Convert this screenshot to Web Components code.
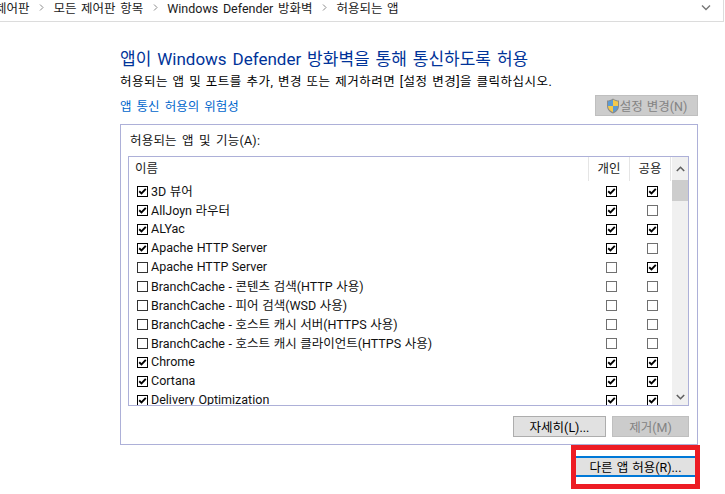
<!DOCTYPE html>
<html lang="ko">
<head>
<meta charset="utf-8">
<title>허용되는 앱</title>
<style>
    html, body { margin: 0; padding: 0; background: #fff; overflow: hidden; }
    body { font: 12.5px Roboto, "Noto Sans CJK KR", sans-serif; color: #000; }
</style>
</head>
<body>
<address-bar></address-bar>
<allowed-apps-page></allowed-apps-page>

<script>
const FONT = `Roboto, "Noto Sans CJK KR", sans-serif`;

class AddressBar extends HTMLElement {
    constructor() {
        super();
        this.shadowDOM = this.attachShadow({mode: "open"});
        const crumbs = ["제어판", "모든 제어판 항목", "Windows Defender 방화벽", "허용되는 앱"];
        const chevron = `<svg width="5" height="7" viewBox="0 0 5 7"><path d="M1 .5 4 3.5 1 6.5" fill="none" stroke="#8a8a8a"/></svg>`;
        this.shadowDOM.innerHTML = `
            <style>
                :host {
                    display: flex;
                    align-items: center;
                    box-sizing: border-box;
                    height: 22px;
                    width: 724px;
                    padding: 0 12px 6px 0;
                    border-bottom: 1px solid #dcdcdc;
                    border-right: 1px solid #dcdcdc;
                    font: 12.5px ${FONT};
                    word-spacing: 1.5px;
                    color: #1a1a1a;
                    overflow: hidden;
                }
                .trail { display: flex; align-items: center; gap: 9.5px; margin-left: -5px; white-space: nowrap; flex: 1; }
            </style>
            <div class="trail">${crumbs.map(c => `<span>${c}</span>`).join(chevron)}</div>
            <svg width="10" height="6" viewBox="0 0 10 6"><path d="M1 .5 5 4.5 9 .5" fill="none" stroke="#777" stroke-width="1.4"/></svg>`;
    }
}
customElements.define("address-bar", AddressBar);

class WinButton extends HTMLElement {
    constructor() {
        super();
        this.attachShadow({mode: "open"}).innerHTML = `
            <style>
                :host {
                    display: inline-flex;
                    align-items: center;
                    justify-content: center;
                    box-sizing: border-box;
                    height: 21px;
                    background: #e1e1e1;
                    border: 1px solid #adadad;
                    font: 12.5px ${FONT};
                    word-spacing: 1px;
                    color: #000;
                    white-space: nowrap;
                }
                :host([disabled]) {
                    background: #cccccc;
                    border-color: #bfbfbf;
                    color: #838383;
                }
            </style>
            <slot></slot>`;
    }
}
customElements.define("win-button", WinButton);

class WinCheck extends HTMLElement {
    constructor() {
        super();
        const checked = this.hasAttribute("checked");
        this.attachShadow({mode: "open"}).innerHTML = `
            <style>
                :host {
                    display: block;
                    flex: none;
                    box-sizing: border-box;
                    width: 11px;
                    height: 11px;
                    border: 1px solid ${checked ? "#000" : "var(--off-border, #333)"};
                    background: #fff;
                }
                svg { display: block; }
            </style>
            ${checked ? `<svg width="9" height="9" viewBox="0 0 9 9"><path d="M1.2 4.2 3.5 6.4 7.8 1.8" fill="none" stroke="#000" stroke-width="1.9"/></svg>` : ""}`;
    }
}
customElements.define("win-check", WinCheck);

class AppRow extends HTMLElement {
    constructor() {
        super();
        const flags = (this.getAttribute("flags") || "000").split("");
        const box = on => `<win-check ${on === "1" ? "checked" : ""}></win-check>`;
        this.attachShadow({mode: "open"}).innerHTML = `
            <style>
                :host {
                    display: grid;
                    grid-template-columns: 460px 41px 41px;
                    height: 19px;
                    align-items: center;
                    flex: none;
                }
                .name { display: flex; align-items: center; gap: 3px; padding-left: 8px; white-space: nowrap; color: #111; }
                .name span { margin-top: -2px; }
                .cell { display: flex; justify-content: center; padding-left: 3px; --off-border: #707070; }
            </style>
            <div class="name">${box(flags[0])}<span><slot></slot></span></div>
            <div class="cell">${box(flags[1])}</div>
            <div class="cell">${box(flags[2])}</div>`;
    }
}
customElements.define("app-row", AppRow);

class AppList extends HTMLElement {
    constructor() {
        super();
        this.attachShadow({mode: "open"}).innerHTML = `
            <style>
                :host {
                    display: grid;
                    grid-template-columns: 1fr 16px;
                    box-sizing: border-box;
                    width: 561px;
                    height: 250px;
                    border: 1px solid #adb0d8;
                    background: #fff;
                    overflow: hidden;
                    font: 12.5px ${FONT};
                    word-spacing: .5px;
                }
                .main { display: flex; flex-direction: column; overflow: hidden; min-width: 0; }
                .head {
                    display: grid;
                    grid-template-columns: 460px 41px 41px;
                    height: 24px;
                    flex: none;
                    color: #222;
                }
                .head div { display: flex; align-items: center; justify-content: center; border-right: 1px solid #e5e5e5; padding-bottom: 4px; }
                .head div:first-child { justify-content: flex-start; padding-left: 6px; }
                .rows { display: flex; flex-direction: column; margin-top: 1px; }
                .bar { background: #f0f0f0; display: flex; flex-direction: column; align-items: center; }
                .bar .arrow { height: 23px; display: flex; align-items: center; justify-content: center; flex: none; }
                .thumb { width: 100%; height: 21px; background: #cdcdcd; flex: none; }
                .track { flex: 1; }
            </style>
            <div class="main">
                <div class="head"><div>이름</div><div>개인</div><div>공용</div></div>
                <div class="rows"><slot></slot></div>
            </div>
            <div class="bar">
                <div class="arrow"><svg width="9" height="6" viewBox="0 0 9 6"><path d="M.8 5 4.5 1.3 8.2 5" fill="none" stroke="#606060" stroke-width="1.6"/></svg></div>
                <div class="thumb"></div>
                <div class="track"></div>
                <div class="arrow" style="height:17px"><svg width="9" height="6" viewBox="0 0 9 6"><path d="M.8 1 4.5 4.7 8.2 1" fill="none" stroke="#606060" stroke-width="1.6"/></svg></div>
            </div>`;
    }
}
customElements.define("app-list", AppList);

class AllowedAppsPage extends HTMLElement {
    constructor() {
        super();
        const apps = [
            ["3D 뷰어", "111"],
            ["AllJoyn 라우터", "110"],
            ["ALYac", "111"],
            ["Apache HTTP Server", "110"],
            ["Apache HTTP Server", "001"],
            ["BranchCache - 콘텐츠 검색(HTTP 사용)", "000"],
            ["BranchCache - 피어 검색(WSD 사용)", "000"],
            ["BranchCache - 호스트 캐시 서버(HTTPS 사용)", "000"],
            ["BranchCache - 호스트 캐시 클라이언트(HTTPS 사용)", "000"],
            ["Chrome", "111"],
            ["Cortana", "111"],
            ["Delivery Optimization", "111"]
        ];
        this.attachShadow({mode: "open"}).innerHTML = `
            <style>
                :host {
                    display: block;
                    box-sizing: border-box;
                    width: 725px;
                    padding: 26px 0 0 120px;
                    font: 12.5px ${FONT};
                    word-spacing: 1px;
                }
                h1 {
                    margin: 0;
                    height: 22px;
                    line-height: 22px;
                    font-size: 17px;
                    font-weight: 400;
                    word-spacing: 1.7px;
                    color: #003399;
                    white-space: nowrap;
                }
                .sub { margin-top: 2px; height: 20px; line-height: 20px; letter-spacing: .5px; white-space: nowrap; }
                .link-row { display: flex; justify-content: space-between; align-items: center; width: 578px; margin-top: 3px; height: 21px; }
                .link-row a { color: #0066cc; text-decoration: none; word-spacing: 2px; }
                .shield { margin-right: 0; }
                .group {
                    box-sizing: border-box;
                    width: 578px;
                    height: 321px;
                    margin-top: 8px;
                    border: 1px solid #adb0d8;
                    padding: 0 8px 0 7px;
                }
                .group-label { height: 31px; line-height: 32px; padding-left: 2px; word-spacing: 2px; letter-spacing: .2px; color: #111; }
                .actions { display: flex; justify-content: flex-end; gap: 6px; margin-top: 10px; }
                .call-out {
                    box-sizing: border-box;
                    width: 129px;
                    height: 44px;
                    margin-left: 451px;
                    border: 5px solid #ed1c24;
                    padding: 6px 0 0;
                }
                .call-out win-button {
                    display: flex;
                    height: 21px;
                    width: 119px;
                    border-width: 2px 0;
                    border-color: #0078d7;
                    background: #e1e1e1;
                }
            </style>
            <h1>앱이 Windows Defender 방화벽을 통해 통신하도록 허용</h1>
            <div class="sub">허용되는 앱 및 포트를 추가, 변경 또는 제거하려면 [설정 변경]을 클릭하십시오.</div>
            <div class="link-row">
                <a href="#">앱 통신 허용의 위험성</a>
                <win-button disabled style="width:103px">
                    <svg class="shield" width="14" height="16" viewBox="0 0 14 16" style="vertical-align:-4px">
                        <path d="M7 .5C5 2 3 2.6 1 2.6V8c0 3.5 2.5 6 6 7.5 3.5-1.500 6-4 6-7.500V2.600C11 2.600 9 2 7 .5Z" fill="#8a8a8a"/>
                        <path d="M7 1.6V8H2V3.5C3.8 3.4 5.5 2.8 7 1.6Z" fill="#5b9bd5"/>
                        <path d="M7 8h5c0 2.8-2 4.9-5 6.3V8Z" fill="#5b9bd5"/>
                        <path d="M7 1.6c1.500 1.200 3.200 1.800 5 1.900V8H7V1.600Z" fill="#f2c94c"/>
                        <path d="M2 8h5v6.3C4 12.900 2 10.800 2 8Z" fill="#f2c94c"/>
                    </svg>설정 변경(N)
                </win-button>
            </div>
            <div class="group">
                <div class="group-label">허용되는 앱 및 기능(A):</div>
                <app-list>
                    ${apps.map(a => `<app-row flags="${a[1]}">${a[0]}</app-row>`).join("")}
                </app-list>
                <div class="actions">
                    <win-button style="width:93px">자세히(L)...</win-button>
                    <win-button disabled style="width:77px">제거(M)</win-button>
                </div>
            </div>
            <div class="call-out"><win-button>다른 앱 허용(R)...</win-button></div>`;
    }
}
customElements.define("allowed-apps-page", AllowedAppsPage);
</script>
</body>
</html>
